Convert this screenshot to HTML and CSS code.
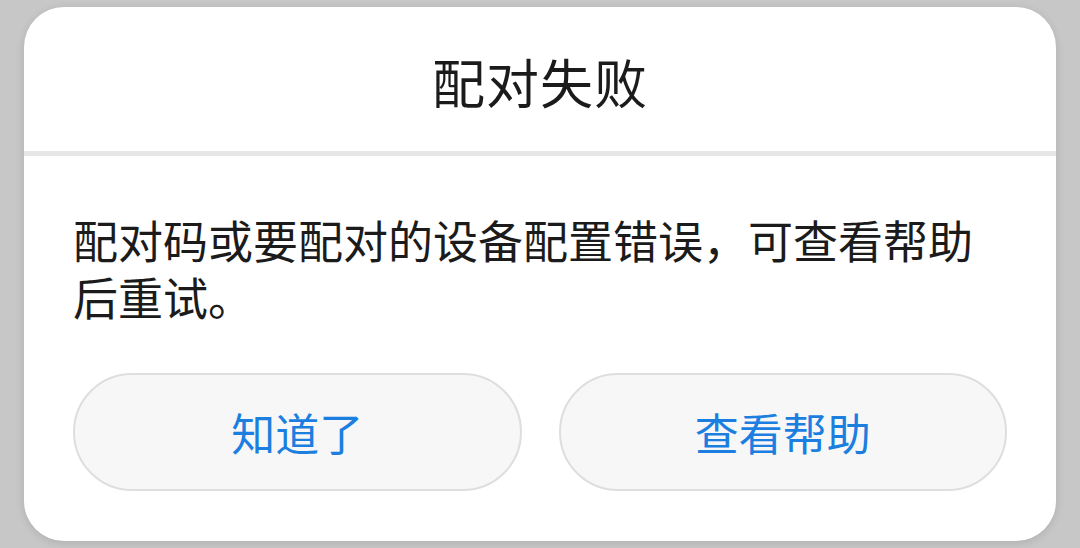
FILE: index.html
```html
<!DOCTYPE html>
<html lang="zh-CN">
<head>
<meta charset="utf-8">
<title>配对失败</title>
<link rel="stylesheet" href="styles.css">
</head>
<body>
<div class="screen">
  <div class="dialog">
    <div class="header"><h1 class="title">配对失败</h1></div>
    <div class="divider"></div>
    <div class="content">
      <p class="message">配对码或要配对的设备配置错误，可查看帮助后重试。</p>
      <div class="actions">
        <button class="btn">知道了</button>
        <button class="btn">查看帮助</button>
      </div>
    </div>
  </div>
</div>
</body>
</html>
```
FILE: styles.css
```css
html, body {
  margin: 0;
  padding: 0;
  width: 1080px;
  height: 548px;
  overflow: hidden;
  background: #c7c7c7;
  font-family: "Noto Sans CJK SC", "Noto Sans", sans-serif;
}
.screen {
  width: 1080px;
  height: 548px;
  padding: 7px 24px 0 24px;
  box-sizing: border-box;
}
.dialog {
  width: 1032px;
  height: 534px;
  background: #ffffff;
  border-radius: 40px;
  box-shadow: 0 2px 8px rgba(0, 0, 0, 0.12);
  display: flex;
  flex-direction: column;
  overflow: hidden;
}
.header {
  height: 144px;
  display: flex;
  align-items: center;
  justify-content: center;
}
.title {
  margin: 0;
  font-size: 53px;
  font-weight: 400;
  color: #1b1b1b;
  line-height: 1;
  letter-spacing: 1px;
  padding-top: 4px;
}
.divider {
  height: 5px;
  background: #e6e6e6;
}
.content {
  padding: 55px 49px 0 49px;
  display: flex;
  flex-direction: column;
}
.message {
  margin: 0;
  font-size: 45px;
  font-weight: 400;
  line-height: 57px;
  color: #1b1b1b;
  width: 920px;
}
.actions {
  margin-top: 48px;
  display: flex;
  gap: 37px;
}
.btn {
  flex: 1;
  height: 118px;
  border: 2px solid #dedede;
  background: #f7f7f8;
  border-radius: 59px;
  font-family: "Noto Sans CJK SC", "Noto Sans", sans-serif;
  font-size: 44px;
  font-weight: 400;
  color: #1c7fe0;
  padding: 0;
  line-height: 1;
}
```
